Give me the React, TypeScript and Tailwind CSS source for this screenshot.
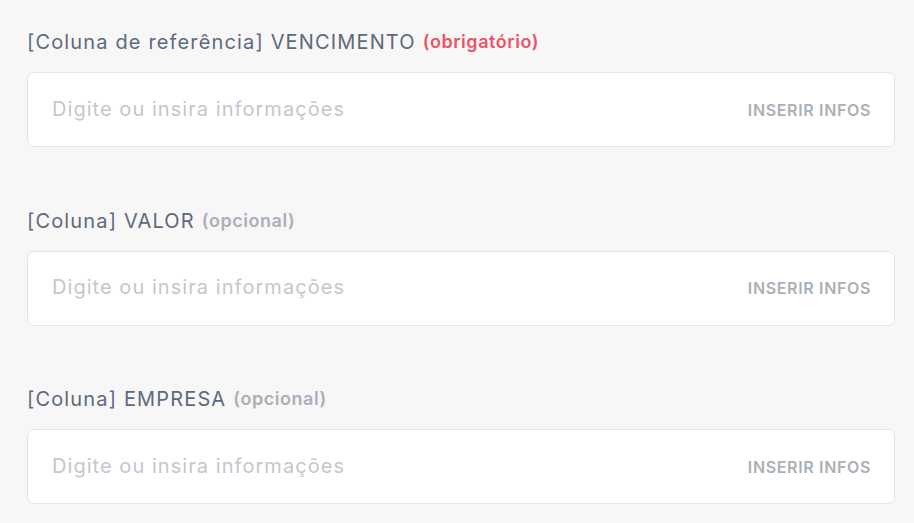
import React from "react";

const font = { fontFamily: "Inter, 'Open Sans', sans-serif" };

function Field({ name, tag, required }: { name: string; tag: string; required?: boolean }) {
  return (
    <div className="flex flex-col">
      <div className="h-[24px] flex items-center text-[20px] leading-[24px] tracking-[1.15px] text-[#5d6a7b]">
        <span>{name}</span>
        <span className={"ml-[7px] font-semibold text-[18px] tracking-[0.55px] " + (required ? "text-[#ec5364]" : "text-[#a9b0b9]")}>
          {tag}
        </span>
      </div>
      <div className="mt-[18px] h-[75px] rounded-[7px] border border-[#e3e5e8] bg-white flex items-center justify-between pl-[24px] pr-[23px]">
        <span className="text-[20px] leading-[24px] -mt-[2px] tracking-[1.05px] text-[#c3c7ce]">Digite ou insira informações</span>
        <span className="text-[16px] font-semibold tracking-[0.65px] text-[#a9b0b8]">INSERIR INFOS</span>
      </div>
    </div>
  );
}

export default function App() {
  return (
    <div style={font} className="w-[914px] h-[523px] bg-[#f7f7f8] pl-[27px] pr-[19px] pt-[30px] flex flex-col gap-[61.5px] overflow-hidden">
      <Field name="[Coluna de referência] VENCIMENTO" tag="(obrigatório)" required />
      <Field name="[Coluna] VALOR" tag="(opcional)" />
      <Field name="[Coluna] EMPRESA" tag="(opcional)" />
    </div>
  );
}
